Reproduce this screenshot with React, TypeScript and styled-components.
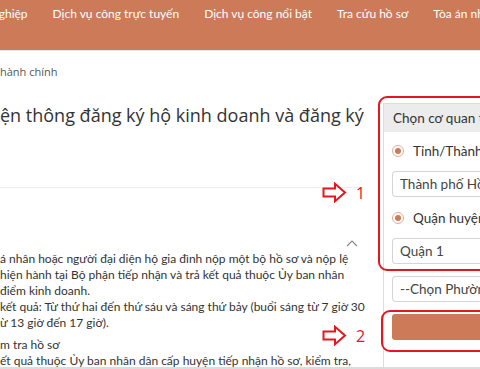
import React from "react";
import styled, { createGlobalStyle } from "styled-components";

const Global = createGlobalStyle`
  html, body { margin: 0; padding: 0; background: #fff; overflow: hidden; }
  body { width: 480px; height: 369px; font-family: "Lato", "Open Sans", sans-serif; color: #333; }
  * { box-sizing: border-box; }
`;

const ORANGE = "#cc7a58";
const RED = "#e5161e";

const Page = styled.div`
  width: 480px;
  height: 369px;
  overflow: hidden;
`;

const Header = styled.header`
  height: 51px;
  background: ${ORANGE};
  border-bottom: 1px solid #e6e6e6;
  overflow: hidden;
`;

const Nav = styled.nav`
  display: flex;
  gap: 25px;
  padding-top: 5px;
  margin-left: -8px;
  white-space: nowrap;
`;

const NavItem = styled.span`
  color: #fff;
  font-family: "Lato", sans-serif;
  font-size: 12px;
  line-height: 18px;
`;

const Body = styled.div`
  position: relative;
  display: flex;
  height: 318px;
  border-bottom: 2px solid #dcdcdc;
  overflow: hidden;
`;

const Main = styled.main`
  flex: none;
  width: 362px;
  display: block;
`;

const Breadcrumb = styled.div`
  margin-top: 13px;
  font-size: 11px;
  line-height: 15px;
  color: #555;
  font-family: "Open Sans", sans-serif;
`;

const Title = styled.h1`
  margin: 22px 0 0;
  font-family: "Open Sans", sans-serif;
  font-weight: 400;
  font-size: 18px;
  line-height: 28px;
  color: #333;
  white-space: nowrap;
`;

const Divider = styled.hr`
  margin: 58px 0 0;
  border: 0;
  border-top: 1px solid #ececec;
`;

const AccordionHead = styled.div`
  display: flex;
  justify-content: flex-end;
  align-items: center;
  padding-right: 4px;
  margin-top: 48px;
  height: 14px;
`;

const Chevron = styled.svg`
  width: 12px;
  height: 8px;
`;

const Paragraph = styled.p<{ $gap?: number }>`
  margin: ${(p) => p.$gap ?? 0}px 0 0;
  font-size: 12px;
  line-height: 16px;
  color: #333;
  white-space: nowrap;
`;

const Sidebar = styled.aside`
  flex: none;
  width: 260px;
  margin-left: 21px;
  padding-top: 52px;
`;

const Panel = styled.section`
  border: 1px solid #dcdcdc;
  border-right: 0;
  border-bottom: 0;
  height: 100%;
`;

const PanelHead = styled.div`
  height: 28px;
  background: #ececec;
  padding-left: 9px;
  display: flex;
  align-items: center;
  font-size: 13.5px;
  color: #333;
  white-space: nowrap;
`;

const PanelBody = styled.div`
  display: flex;
  flex-direction: column;
  gap: 12px;
  padding: 10px 0 0 8px;
`;

const RadioRow = styled.label`
  display: flex;
  align-items: center;
  gap: 9px;
  height: 17px;
  font-size: 13.5px;
  color: #333;
  white-space: nowrap;
`;

const Radio = styled.span`
  width: 12px;
  height: 12px;
  border-radius: 50%;
  border: 1px solid #e2ab94;
  display: flex;
  align-items: center;
  justify-content: center;
  &::after {
    content: "";
    width: 6px;
    height: 6px;
    border-radius: 50%;
    background: ${ORANGE};
  }
`;

const Select = styled.div`
  flex: none;
  height: 26px;
  border: 1px solid #d5d5d5;
  border-radius: 4px;
  border-right: 0;
  border-top-right-radius: 0;
  border-bottom-right-radius: 0;
  padding-left: 7px;
  display: flex;
  align-items: center;
  font-size: 13.5px;
  color: #444;
  white-space: nowrap;
`;

const Button = styled.button`
  flex: none;
  height: 26px;
  border: 0;
  border-radius: 3px 0 0 3px;
  background: ${ORANGE};
  padding: 0;
`;

const Highlight = styled.div<{ $x: number; $y: number; $w: number; $h: number }>`
  position: absolute;
  left: ${(p) => p.$x}px;
  top: ${(p) => p.$y}px;
  width: ${(p) => p.$w}px;
  height: ${(p) => p.$h}px;
  border: 2px solid ${RED};
  border-radius: 9px;
  pointer-events: none;
`;

const Marker = styled.div<{ $x: number; $y: number }>`
  position: absolute;
  left: ${(p) => p.$x}px;
  top: ${(p) => p.$y}px;
  display: flex;
  align-items: center;
  gap: 9px;
`;

const MarkerNum = styled.span`
  color: ${RED};
  font-family: "Open Sans", sans-serif;
  font-size: 16px;
  line-height: 18px;
`;

const Arrow = () => (
  <svg width="25" height="21" viewBox="0 0 25 21">
    <path
      d="M1.5 6.5 H13 V1.8 L23 10.5 L13 19.2 V14.5 H1.5 Z"
      fill="none"
      stroke={RED}
      strokeWidth="2"
      strokeLinejoin="miter"
    />
  </svg>
);

export default function App() {
  return (
    <Page>
      <Global />
      <Header>
        <Nav>
          <NavItem>nghiệp</NavItem>
          <NavItem>Dịch vụ công trực tuyến</NavItem>
          <NavItem>Dịch vụ công nổi bật</NavItem>
          <NavItem>Tra cứu hồ sơ</NavItem>
          <NavItem>Tòa án nhân dân</NavItem>
        </Nav>
      </Header>
      <Body>
        <Main>
          <Breadcrumb>hành chính</Breadcrumb>
          <Title>ện thông đăng ký hộ kinh doanh và đăng ký</Title>
          <Divider />
          <AccordionHead>
            <Chevron viewBox="0 0 12 8">
              <path d="M1 7 L6 2 L11 7" fill="none" stroke="#888" strokeWidth="1.2" />
            </Chevron>
          </AccordionHead>
          <Paragraph $gap={1}>á nhân hoặc người đại diện hộ gia đình nộp một bộ hồ sơ và nộp lệ</Paragraph>
          <Paragraph>hiện hành tại Bộ phận tiếp nhận và trả kết quả thuộc Ủy ban nhân</Paragraph>
          <Paragraph>điểm kinh doanh.</Paragraph>
          <Paragraph>kết quả: Từ thứ hai đến thứ sáu và sáng thứ bảy (buổi sáng từ 7 giờ 30</Paragraph>
          <Paragraph>ừ 13 giờ đến 17 giờ).</Paragraph>
          <Paragraph $gap={6}>m tra hồ sơ</Paragraph>
          <Paragraph>ết quả thuộc Ủy ban nhân dân cấp huyện tiếp nhận hồ sơ, kiểm tra,</Paragraph>
        </Main>
        <Sidebar>
          <Panel>
            <PanelHead>Chọn cơ quan thực hiện</PanelHead>
            <PanelBody>
              <RadioRow>
                <Radio />
                Tỉnh/Thành phố
              </RadioRow>
              <Select>Thành phố Hồ Chí Minh</Select>
              <RadioRow>
                <Radio />
                Quận huyện
              </RadioRow>
              <Select>Quận 1</Select>
              <Select>--Chọn Phường/Xã--</Select>
              <Button aria-label="Tìm kiếm" />
            </PanelBody>
          </Panel>
        </Sidebar>
        <Highlight $x={378} $y={45} $w={200} $h={175} />
        <Highlight $x={381} $y={259} $w={200} $h={42} />
        <Marker $x={322} $y={131}>
          <Arrow />
          <MarkerNum>1</MarkerNum>
        </Marker>
        <Marker $x={322} $y={274}>
          <Arrow />
          <MarkerNum>2</MarkerNum>
        </Marker>
      </Body>
    </Page>
  );
}
